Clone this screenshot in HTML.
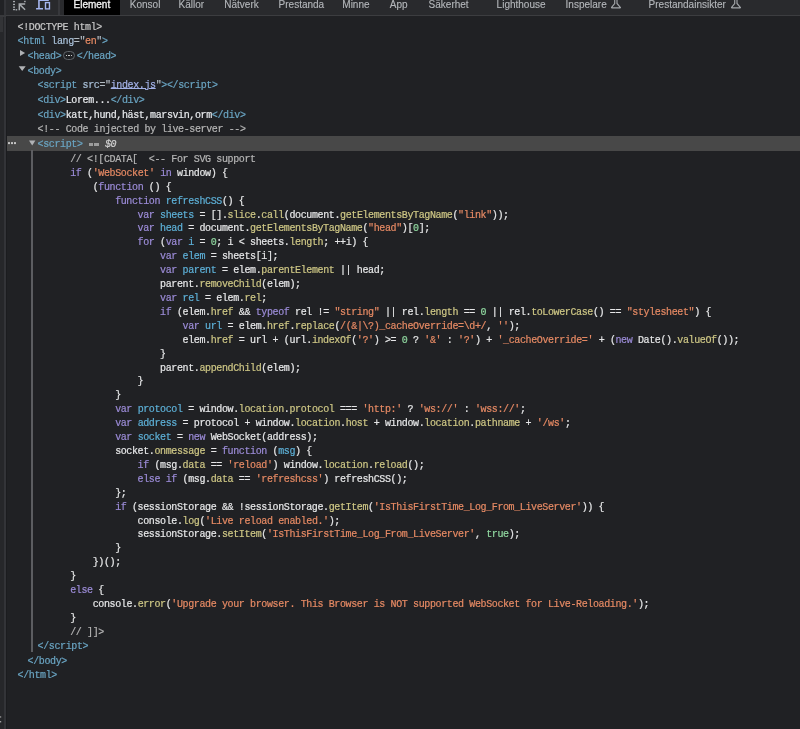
<!DOCTYPE html>
<html><head><meta charset="utf-8"><style>
html,body{margin:0;padding:0}
body{width:800px;height:729px;overflow:hidden;background:#202124;position:relative;font-family:"Liberation Mono",monospace}
.ln{position:absolute;white-space:pre;-webkit-text-stroke:0.2px currentColor;font-size:10px;line-height:14px;letter-spacing:-0.380px;color:#e6e7e8}
.k{color:#9c8cd8}.d{color:#5db0d7}.p{color:#cec785}.s{color:#e68a64}.n{color:#90d8a0}.c{color:#b6b6b6}
.t{color:#6aa5c3}.an{color:#a9c1d9}.aeq{color:#b4bcc4}.av{color:#e68a64}.av2{color:#d8d9da}.lk{color:#a3b2e8;text-decoration:underline;text-underline-offset:0px;text-decoration-thickness:1px}
.dt{color:#c8c8c8}.tx{color:#e8eaed}.cm{color:#b6b6b6}.eqb{display:inline-block;width:4.6px;height:2.3px;background:#9c9c9c;margin:0 0.5px;vertical-align:1.6px}.dl{font-style:italic;color:#d2d2d2}
.pill{display:inline-block;width:10px;height:6.5px;border:1px solid #5f6368;border-radius:5px;margin:0 2px 0 1.5px;vertical-align:-1px;position:relative;letter-spacing:0}
.pill:after{content:"";position:absolute;left:1.9px;top:2.6px;width:6.4px;height:1.5px;background:repeating-linear-gradient(90deg,#c8c8c8 0 1.5px,transparent 1.5px 2.45px)}
#root{position:absolute;left:0;top:0;width:800px;height:729px;will-change:transform}#code{position:absolute;left:0;top:0}
#tabbar{position:absolute;left:0;top:0;width:800px;height:15.1px;background:#292a2d;border-bottom:1.5px solid #3c3d40}
.tab{position:absolute;top:-2px;-webkit-text-stroke:0.12px currentColor;font-family:"Liberation Sans",sans-serif;font-size:10px;line-height:14px;color:#b4b7bb;white-space:pre}
.tab.sel{color:#f2f2f2;-webkit-text-stroke:0.3px currentColor}
#seltab{position:absolute;left:63.8px;top:0;width:56.7px;height:15px;background:#000}
#sep{position:absolute;left:57.8px;top:0;width:2.2px;height:15px;background:#37383c}
#lstrip{position:absolute;left:0;top:0;width:3.6px;height:729px;background:linear-gradient(#212225 0 15px,#26272a 15px)}#lblock{position:absolute;left:0;top:17px;width:3px;height:15px;background:#333437}
#lline{position:absolute;left:3.6px;top:0;width:2.4px;height:729px;background:#333438}#ldark{position:absolute;left:6px;top:16.5px;width:0.8px;height:713px;background:#1b1c1f}#lborder{position:absolute;left:0;top:15.1px;width:6px;height:1.5px;background:#38393c}
#selrow{position:absolute;left:6px;top:136px;width:794px;height:14.6px;background:#484848}
#guide{position:absolute;left:31.4px;top:150.4px;width:1.5px;height:502px;background:#5c5d61}
.flask{position:absolute;top:0}
.tri{position:absolute;width:0;height:0}
</style></head><body><div id="root">
<div id="selrow"></div>
<div id="guide"></div>
<div id="tabbar"></div>
<div id="seltab"></div>
<div id="sep"></div>
<div class="tab sel" style="left:73.5px">Element</div>
<div class="tab" style="left:129.8px">Konsol</div>
<div class="tab" style="left:178.6px">Källor</div>
<div class="tab" style="left:224.3px">Nätverk</div>
<div class="tab" style="left:278.6px">Prestanda</div>
<div class="tab" style="left:342.3px">Minne</div>
<div class="tab" style="left:389.8px">App</div>
<div class="tab" style="left:428.6px">Säkerhet</div>
<div class="tab" style="left:496.6px">Lighthouse</div>
<div class="tab" style="left:565.6px">Inspelare</div>
<div class="tab" style="left:648.6px">Prestandainsikter</div>
<svg class="flask" style="left:610.5px" width="12" height="12" viewBox="0 0 12 12"><path d="M3.7 -1V3.5L0.6 7.3Q0.2 7.9 0.9 7.9H9Q9.7 7.9 9.3 7.3L6.0 3.5V-1" fill="none" stroke="#a3a6aa" stroke-width="1.15"/></svg><svg class="flask" style="left:730.5px" width="12" height="12" viewBox="0 0 12 12"><path d="M3.7 -1V3.5L0.6 7.3Q0.2 7.9 0.9 7.9H9Q9.7 7.9 9.3 7.3L6.0 3.5V-1" fill="none" stroke="#a3a6aa" stroke-width="1.15"/></svg>
<div id="code"><div class="ln" style="top:20.50px;left:17.60px"><span class="dt">&lt;!DOCTYPE html&gt;</span></div>
<div class="ln" style="top:35.20px;left:17.60px"><span class="t">&lt;html</span> <span class="an">lang</span><span class="aeq">="</span><span class="av">en</span><span class="aeq">"</span><span class="t">&gt;</span></div>
<div class="ln" style="top:49.90px;left:27.60px"><span class="t">&lt;head&gt;</span><span class="pill"></span><span class="t">&lt;/head&gt;</span></div>
<div class="ln" style="top:64.60px;left:27.60px"><span class="t">&lt;body&gt;</span></div>
<div class="ln" style="top:79.30px;left:37.60px"><span class="t">&lt;script</span> <span class="an">src</span><span class="aeq">="</span><span class="lk">index.js</span><span class="aeq">"</span><span class="t">&gt;&lt;/script&gt;</span></div>
<div class="ln" style="top:94.00px;left:37.60px"><span class="t">&lt;div&gt;</span><span class="tx">Lorem...</span><span class="t">&lt;/div&gt;</span></div>
<div class="ln" style="top:108.70px;left:37.60px"><span class="t">&lt;div&gt;</span><span class="tx">katt,hund,häst,marsvin,orm</span><span class="t">&lt;/div&gt;</span></div>
<div class="ln" style="top:123.40px;left:37.60px"><span class="cm">&lt;!-- Code injected by live-server --&gt;</span></div>
<div class="ln" style="top:138.10px;left:37.60px"><span class="t">&lt;script&gt;</span> <span class="eqb"></span><span class="eqb"></span> <i class="dl">$0</i></div>
<div class="ln" style="top:152.90px;left:70.18px"><span class="c">// &lt;![CDATA[  &lt;-- For SVG support</span></div>
<div class="ln" style="top:166.81px;left:70.18px"><span class="k">if</span> (<span class="s">&#x27;WebSocket&#x27;</span> <span class="k">in</span> window) {</div>
<div class="ln" style="top:180.72px;left:92.66px">(<span class="k">function</span> () {</div>
<div class="ln" style="top:194.63px;left:115.14px"><span class="k">function</span> <span class="d">refreshCSS</span>() {</div>
<div class="ln" style="top:208.54px;left:137.62px"><span class="k">var</span> <span class="d">sheets</span> = [].<span class="p">slice</span>.<span class="p">call</span>(document.<span class="p">getElementsByTagName</span>(<span class="s">&quot;link&quot;</span>));</div>
<div class="ln" style="top:222.45px;left:137.62px"><span class="k">var</span> <span class="d">head</span> = document.<span class="p">getElementsByTagName</span>(<span class="s">&quot;head&quot;</span>)[<span class="n">0</span>];</div>
<div class="ln" style="top:236.36px;left:137.62px"><span class="k">for</span> (<span class="k">var</span> <span class="d">i</span> = <span class="n">0</span>; i &lt; sheets.<span class="p">length</span>; ++i) {</div>
<div class="ln" style="top:250.27px;left:160.10px"><span class="k">var</span> <span class="d">elem</span> = sheets[i];</div>
<div class="ln" style="top:264.18px;left:160.10px"><span class="k">var</span> <span class="d">parent</span> = elem.<span class="p">parentElement</span> || head;</div>
<div class="ln" style="top:278.09px;left:160.10px">parent.<span class="p">removeChild</span>(elem);</div>
<div class="ln" style="top:292.00px;left:160.10px"><span class="k">var</span> <span class="d">rel</span> = elem.<span class="p">rel</span>;</div>
<div class="ln" style="top:305.91px;left:160.10px"><span class="k">if</span> (elem.<span class="p">href</span> &amp;&amp; <span class="k">typeof</span> rel != <span class="s">&quot;string&quot;</span> || rel.<span class="p">length</span> == <span class="n">0</span> || rel.<span class="p">toLowerCase</span>() == <span class="s">&quot;stylesheet&quot;</span>) {</div>
<div class="ln" style="top:319.82px;left:182.58px"><span class="k">var</span> <span class="d">url</span> = elem.<span class="p">href</span>.<span class="p">replace</span>(<span class="s">/(&amp;|\?)_cacheOverride=\d+/</span>, <span class="s">&#x27;&#x27;</span>);</div>
<div class="ln" style="top:333.73px;left:182.58px">elem.<span class="p">href</span> = url + (url.<span class="p">indexOf</span>(<span class="s">&#x27;?&#x27;</span>) &gt;= <span class="n">0</span> ? <span class="s">&#x27;&amp;&#x27;</span> : <span class="s">&#x27;?&#x27;</span>) + <span class="s">&#x27;_cacheOverride=&#x27;</span> + (<span class="k">new</span> Date().<span class="p">valueOf</span>());</div>
<div class="ln" style="top:347.64px;left:160.10px">}</div>
<div class="ln" style="top:361.55px;left:160.10px">parent.<span class="p">appendChild</span>(elem);</div>
<div class="ln" style="top:375.46px;left:137.62px">}</div>
<div class="ln" style="top:389.37px;left:115.14px">}</div>
<div class="ln" style="top:403.28px;left:115.14px"><span class="k">var</span> <span class="d">protocol</span> = window.<span class="p">location</span>.<span class="p">protocol</span> === <span class="s">&#x27;http:&#x27;</span> ? <span class="s">&#x27;ws://&#x27;</span> : <span class="s">&#x27;wss://&#x27;</span>;</div>
<div class="ln" style="top:417.19px;left:115.14px"><span class="k">var</span> <span class="d">address</span> = protocol + window.<span class="p">location</span>.<span class="p">host</span> + window.<span class="p">location</span>.<span class="p">pathname</span> + <span class="s">&#x27;/ws&#x27;</span>;</div>
<div class="ln" style="top:431.10px;left:115.14px"><span class="k">var</span> <span class="d">socket</span> = <span class="k">new</span> WebSocket(address);</div>
<div class="ln" style="top:445.01px;left:115.14px">socket.<span class="p">onmessage</span> = <span class="k">function</span> (<span class="d">msg</span>) {</div>
<div class="ln" style="top:458.92px;left:137.62px"><span class="k">if</span> (msg.<span class="p">data</span> == <span class="s">&#x27;reload&#x27;</span>) window.<span class="p">location</span>.<span class="p">reload</span>();</div>
<div class="ln" style="top:472.83px;left:137.62px"><span class="k">else</span> <span class="k">if</span> (msg.<span class="p">data</span> == <span class="s">&#x27;refreshcss&#x27;</span>) refreshCSS();</div>
<div class="ln" style="top:486.74px;left:115.14px">};</div>
<div class="ln" style="top:500.65px;left:115.14px"><span class="k">if</span> (sessionStorage &amp;&amp; !sessionStorage.<span class="p">getItem</span>(<span class="s">&#x27;IsThisFirstTime_Log_From_LiveServer&#x27;</span>)) {</div>
<div class="ln" style="top:514.56px;left:137.62px">console.<span class="p">log</span>(<span class="s">&#x27;Live reload enabled.&#x27;</span>);</div>
<div class="ln" style="top:528.47px;left:137.62px">sessionStorage.<span class="p">setItem</span>(<span class="s">&#x27;IsThisFirstTime_Log_From_LiveServer&#x27;</span>, <span class="n">true</span>);</div>
<div class="ln" style="top:542.38px;left:115.14px">}</div>
<div class="ln" style="top:556.29px;left:92.66px">})();</div>
<div class="ln" style="top:570.20px;left:70.18px">}</div>
<div class="ln" style="top:584.11px;left:70.18px"><span class="k">else</span> {</div>
<div class="ln" style="top:598.02px;left:92.66px">console.<span class="p">error</span>(<span class="s">&#x27;Upgrade your browser. This Browser is NOT supported WebSocket for Live-Reloading.&#x27;</span>);</div>
<div class="ln" style="top:611.93px;left:70.18px">}</div>
<div class="ln" style="top:625.84px;left:70.18px"><span class="c">// ]]&gt;</span></div>
<div class="ln" style="top:639.60px;left:37.60px"><span class="t">&lt;/script&gt;</span></div>
<div class="ln" style="top:654.70px;left:27.60px"><span class="t">&lt;/body&gt;</span></div>
<div class="ln" style="top:669.20px;left:17.60px"><span class="t">&lt;/html&gt;</span></div></div>
<svg style="position:absolute;left:0;top:0" width="60" height="15" viewBox="0 0 60 15">
 <g fill="#a6a9ad"><rect x="13" y="0.9" width="2" height="1.3"/><rect x="13" y="3.8" width="2" height="1.3"/><rect x="13" y="6.5" width="2" height="1.3"/><rect x="13" y="8.9" width="2" height="1.3"/><rect x="15.6" y="9.1" width="1.6" height="1.4"/><rect x="24.1" y="0.8" width="1.6" height="1.4"/></g>
 <path d="M19.3 10.2V4.1H25.2M19.6 4.4L25.1 9.8" stroke="#a6a9ad" stroke-width="1.5" fill="none"/>
 <path d="M38.95 -1V9.5M36.1 8.8H43M38.2 0.3H48.8" stroke="#a5b6ef" stroke-width="1.6" fill="none"/>
 <rect x="45.5" y="2.6" width="3.95" height="6.3" stroke="#a5b6ef" stroke-width="1.4" fill="#202124"/>
</svg>
<div id="lstrip"></div><div id="lblock"></div><div id="lline"></div><div id="ldark"></div><div id="lborder"></div><svg style="position:absolute;left:0;top:710px" width="4" height="19"><rect x="0" y="6.3" width="1.2" height="1.3" fill="#a0a0a0"/><rect x="0" y="11.1" width="1.2" height="1.3" fill="#b0b0b0"/></svg>
<svg style="position:absolute;left:0;top:130px" width="20" height="20"><g fill="#c4c4c4"><rect x="8" y="12.1" width="2" height="2"/><rect x="11" y="12.1" width="2" height="2"/><rect x="14" y="12.1" width="2" height="2"/></g></svg>
<svg style="position:absolute;left:0;top:40px" width="40" height="40"><path d="M20 10L25.1 12.9L20 15.9Z M18.7 26.2H25.7L22.2 31.1Z" fill="#b0b2b5"/></svg>
<svg style="position:absolute;left:0;top:130px" width="40" height="20"><path d="M29 10.6H35.4L32.2 15.6Z" fill="#b0b2b5"/></svg>
</div></body></html>
